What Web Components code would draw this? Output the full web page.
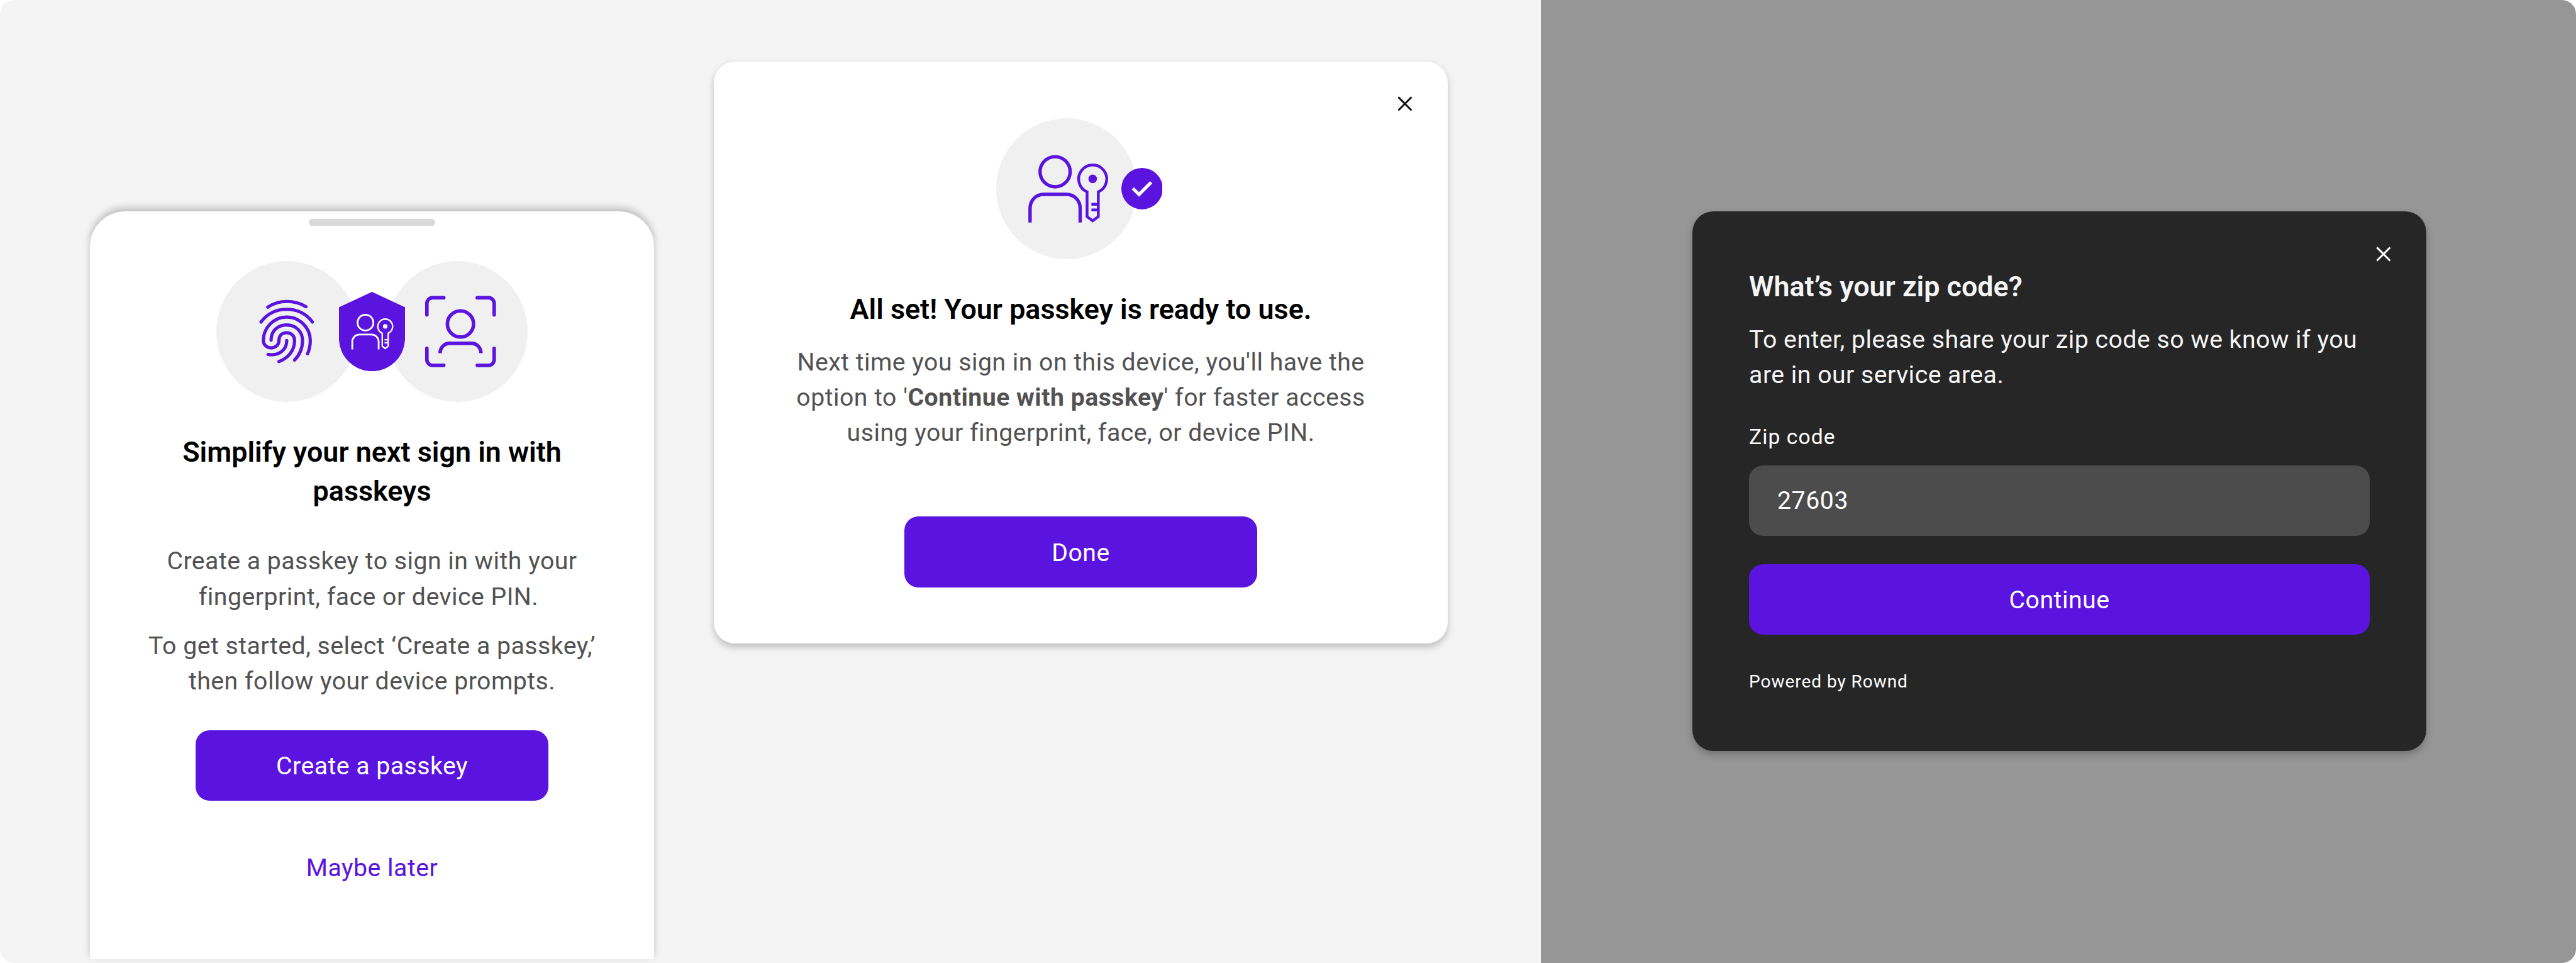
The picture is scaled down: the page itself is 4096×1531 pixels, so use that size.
<!DOCTYPE html>
<html lang="en">
<head>
<meta charset="utf-8">
<title>Passkeys and zip code</title>
<style>
  /* 1rem = 100 design units */
  html { font-size: 70.089px; background: #fff; }
  body { margin: 0; font-family: Roboto, "Liberation Sans", sans-serif; overflow: hidden; }
</style>
</head>
<body>
<app-board>
  <board-panel class="light">
    <bottom-sheet>
      <passkey-hero slot="hero"></passkey-hero>
      <span slot="title">Simplify your next sign in with<br>passkeys</span>
      <body-copy>Create a passkey to sign in with your<br><span style="padding-right:.16rem">fingerprint, face or device PIN.</span></body-copy>
      <body-copy>To get started, select ‘Create a passkey,’<br>then follow your device prompts.</body-copy>
      <action-button slot="actions">Create a passkey</action-button>
      <action-button slot="actions" class="link">Maybe later</action-button>
    </bottom-sheet>
    <success-dialog>
      <ready-badge slot="hero"></ready-badge>
      <span slot="title">All set! Your passkey is ready to use.</span>
      <body-copy>Next time you sign in on this device, you'll have the<br>option to '<b>Continue with passkey</b>' for faster access<br>using your fingerprint, face, or device PIN.</body-copy>
      <action-button slot="actions">Done</action-button>
    </success-dialog>
  </board-panel>
  <board-panel class="dim">
    <zip-dialog>
      <span slot="title">What’s your zip code?</span>
      <body-copy>To enter, please share your zip code so we know if you<br>are in our service area.</body-copy>
      <text-field slot="field"><span slot="label">Zip code</span>27603</text-field>
      <action-button slot="actions" class="wide">Continue</action-button>
      <span slot="footer">Powered by Rownd</span>
    </zip-dialog>
  </board-panel>
</app-board>

<script>
const define = (name, html) => {
  const template = document.createElement('template');
  template.innerHTML = html;
  customElements.define(name, class extends HTMLElement {
    constructor() {
      super();
      this.attachShadow({ mode: 'open' }).append(template.content.cloneNode(true));
    }
  });
};

/* Person with a key beside it; shared by the shield and the success badge. */
const personKey = color => `
  <g fill="none" stroke="${color}">
    <g stroke-width="23">
      <circle cx="431" cy="388" r="102.5"/>
      <path d="M260.500,734V636C260.500,583 301,542 353,542H508C561,542 601.500,583 601.500,636V734"/>
    </g>
    <g stroke-width="19">
      <path d="M648.500,525A95.500,95.500 0 1 1 725,525V693.500L686.700,722L648.500,693.500Z"/>
      <path d="M678,609H725M678,648H725"/>
    </g>
    <circle cx="686.700" cy="436.500" r="29" fill="${color}" stroke="none"/>
  </g>`;

const closeIcon = `
  <svg class="close" viewBox="0 0 34 34" fill="none" stroke="currentColor" stroke-width="4.200">
    <path d="M2,2L32,32M32,2L2,32"/>
  </svg>`;

define('app-board', `
  <style>
    :host { display: flex; width: 4096px; height: 1531px; border-radius: .32rem; overflow: hidden; }
  </style>
  <slot></slot>`);

define('board-panel', `
  <style>
    :host { display: flex; align-items: flex-start; box-sizing: border-box; height: 100%; }
    :host(.light) { width: 34.96rem; flex: none; background: #f4f4f4; padding-left: 2.04rem; gap: 1.36rem; }
    :host(.dim) { flex: 1; background: #969696; padding-left: 3.44rem; }
  </style>
  <slot></slot>`);

define('bottom-sheet', `
  <style>
    :host {
      display: flex; flex-direction: column; align-items: center; box-sizing: border-box;
      width: 12.8rem; height: 16.96rem; margin-top: 4.8rem; padding-top: .16rem;
      background: #fff; border-radius: .8rem .8rem 0 0;
      box-shadow: 0 -.08rem .16rem rgba(0,0,0,.22);
    }
    .handle { width: 2.88rem; height: .16rem; border-radius: .08rem; background: #d9d9d9; }
    .hero { margin-top: .8rem; }
    h2 { margin: .695rem 0 0; font-size: .64rem; line-height: .88rem; font-weight: 600; color: #000; text-align: center; white-space: nowrap; }
    .copy { display: flex; flex-direction: column; gap: .32rem; margin-top: .76rem; }
    .actions { display: flex; flex-direction: column; gap: .72rem; margin-top: .705rem; }
  </style>
  <div class="handle"></div>
  <div class="hero"><slot name="hero"></slot></div>
  <h2><slot name="title"></slot></h2>
  <div class="copy"><slot></slot></div>
  <div class="actions"><slot name="actions"></slot></div>`);

define('passkey-hero', `
  <style>
    :host { display: flex; position: relative; gap: .66rem; }
    .disc { width: 3.2rem; height: 3.2rem; border-radius: 50%; background: #f0f0f0; }
    svg { display: block; width: 100%; height: 100%; }
    .shield { position: absolute; left: 50%; top: .7rem; width: 1.5rem; height: 1.8rem; margin-left: -.75rem; }
  </style>
  <div class="disc">
    <svg viewBox="31 36 960 960" fill="none" stroke="#5b13df" stroke-width="22" stroke-linecap="round">
      <path d="M381,350C419,324 461,311 510,311C560,311 603,323 641,347"/>
      <path d="M335,451C375,397 437,364.500 510,364.500C583,364.500 645,397 685,451"/>
      <path d="M652,667C664,638 670.500,610 670.500,577C670.500,489 598,417.500 510,417.500C422,417.500 351,489 351,577C351,605 374,627 403.500,627C436,627 457,605 457,577C457,545 476,524 510,524C543,524 563.500,547 563.500,577C563.500,644 520,697 457,720"/>
      <path d="M403.500,574C403.500,512 449,471 510,471C573,471 617.500,517 617.500,577C617.500,630 598,674 563,710"/>
      <path d="M510,577C510,637 464,674 410,674C398,674 390,673.500 383,672"/>
    </svg>
  </div>
  <div class="disc">
    <svg viewBox="412 -144 960 960" fill="none" stroke="#5b13df" stroke-width="24">
      <g stroke-linecap="round">
        <path d="M685,222V145A39,39 0 0 1 724,106H800"/>
        <path d="M1028,106H1104A39,39 0 0 1 1143,145V222"/>
        <path d="M685,450V527A39,39 0 0 0 724,566H800"/>
        <path d="M1028,566H1104A39,39 0 0 0 1143,527V450"/>
      </g>
      <circle cx="913.500" cy="284" r="89"/>
      <path d="M775,483C775,446 803,416 839,416H989C1025,416 1053,446 1053,483"/>
    </svg>
  </div>
  <svg class="shield" viewBox="87.300 66 450 540">
    <path fill="#5b13df" d="M312,66L537,171V381A225,225 0 0 1 87,381V171Z"/>
    <g transform="translate(267.500 275.500) scale(.526) translate(-431 -388)">${personKey('#fff')}</g>
  </svg>`);

define('success-dialog', `
  <style>
    :host {
      display: flex; flex-direction: column; align-items: center; box-sizing: border-box; position: relative;
      width: 16.64rem; height: 13.2rem; margin-top: 1.4rem; padding-top: 1.28rem;
      background: #fff; border-radius: .48rem;
      box-shadow: 0 .08rem .16rem rgba(0,0,0,.22);
    }
    .close { position: absolute; top: .79rem; right: .79rem; width: .34rem; height: .34rem; color: #111; }
    h2 { margin: .7rem 0 0; font-size: .64rem; line-height: .88rem; font-weight: 600; color: #000; white-space: nowrap; }
    .copy { margin-top: .36rem; }
    .actions { margin-top: 1.5rem; }
  </style>
  ${closeIcon}
  <slot name="hero"></slot>
  <h2><slot name="title"></slot></h2>
  <div class="copy"><slot></slot></div>
  <div class="actions"><slot name="actions"></slot></div>`);

define('ready-badge', `
  <style>
    :host { display: flex; position: relative; width: 3.84rem; height: 3.2rem; }
    .disc { width: 3.2rem; height: 3.2rem; border-radius: 50%; background: #f0f0f0; }
    svg { display: block; }
    .disc svg { width: 100%; height: 100%; }
    .check { position: absolute; left: 2.833rem; top: 1.13rem; width: .94rem; height: .94rem; }
  </style>
  <div class="disc"><svg viewBox="30 24 960 960">${personKey('#5b13df')}</svg></div>
  <svg class="check" viewBox="880 363 282 282">
    <mask id="tick">
      <path d="M880,363H1162V645H880Z" fill="#fff"/>
      <path d="M958,502L1000.500,543.500L1083,461" fill="none" stroke="#000" stroke-width="22"/>
    </mask>
    <circle cx="1021" cy="504" r="141" fill="#5b13df" mask="url(#tick)"/>
  </svg>`);

define('zip-dialog', `
  <style>
    :host {
      display: flex; flex-direction: column; box-sizing: border-box; position: relative;
      width: 16.64rem; height: 12.24rem; margin-top: 4.8rem; padding: 1.265rem 1.28rem 0;
      background: #262626; color: #f5f5f5; border-radius: .48rem;
      box-shadow: 0 .08rem .16rem rgba(0,0,0,.22);
      --copy-color: #f5f5f5; --copy-align: left;
    }
    .close { position: absolute; top: .79rem; right: .79rem; width: .34rem; height: .34rem; color: #fff; }
    h2 { margin: 0; font-size: .64rem; line-height: .88rem; font-weight: 600; white-space: nowrap; }
    .copy { margin-top: .355rem; }
    .field { margin-top: .7rem; }
    .actions { margin-top: .64rem; }
    footer { margin-top: .785rem; font-size: .4rem; line-height: .56rem; letter-spacing: .0135rem; color: #fff; }
  </style>
  ${closeIcon}
  <h2><slot name="title"></slot></h2>
  <div class="copy"><slot></slot></div>
  <div class="field"><slot name="field"></slot></div>
  <div class="actions"><slot name="actions"></slot></div>
  <footer><slot name="footer"></slot></footer>`);

define('body-copy', `
  <style>
    :host {
      display: block; font-size: .56rem; line-height: .8rem; letter-spacing: .0067rem;
      color: var(--copy-color, #525252); text-align: var(--copy-align, center); white-space: nowrap;
    }
  </style>
  <slot></slot>`);

define('text-field', `
  <style>
    :host { display: flex; flex-direction: column; gap: .32rem; color: #fff; }
    .label { font-size: .48rem; line-height: .64rem; letter-spacing: .015rem; }
    .box {
      display: flex; align-items: center; box-sizing: border-box; height: 1.6rem;
      padding: 0 .64rem; border-radius: .32rem;
      background: #4c4c4c; font-size: .56rem; letter-spacing: .008rem;
    }
  </style>
  <div class="label"><slot name="label"></slot></div>
  <div class="box"><slot></slot></div>`);

define('action-button', `
  <style>
    :host {
      display: flex; align-items: center; justify-content: center; box-sizing: border-box;
      width: 8rem; height: 1.6rem; padding-top: .03rem;
      border-radius: .32rem; background: #5b13df; color: #fff;
      font-size: .56rem; letter-spacing: .0067rem; white-space: nowrap;
    }
    :host(.link) { background: none; color: #5b13df; }
    :host(.wide) { width: auto; }
  </style>
  <slot></slot>`);
</script>
</body>
</html>
